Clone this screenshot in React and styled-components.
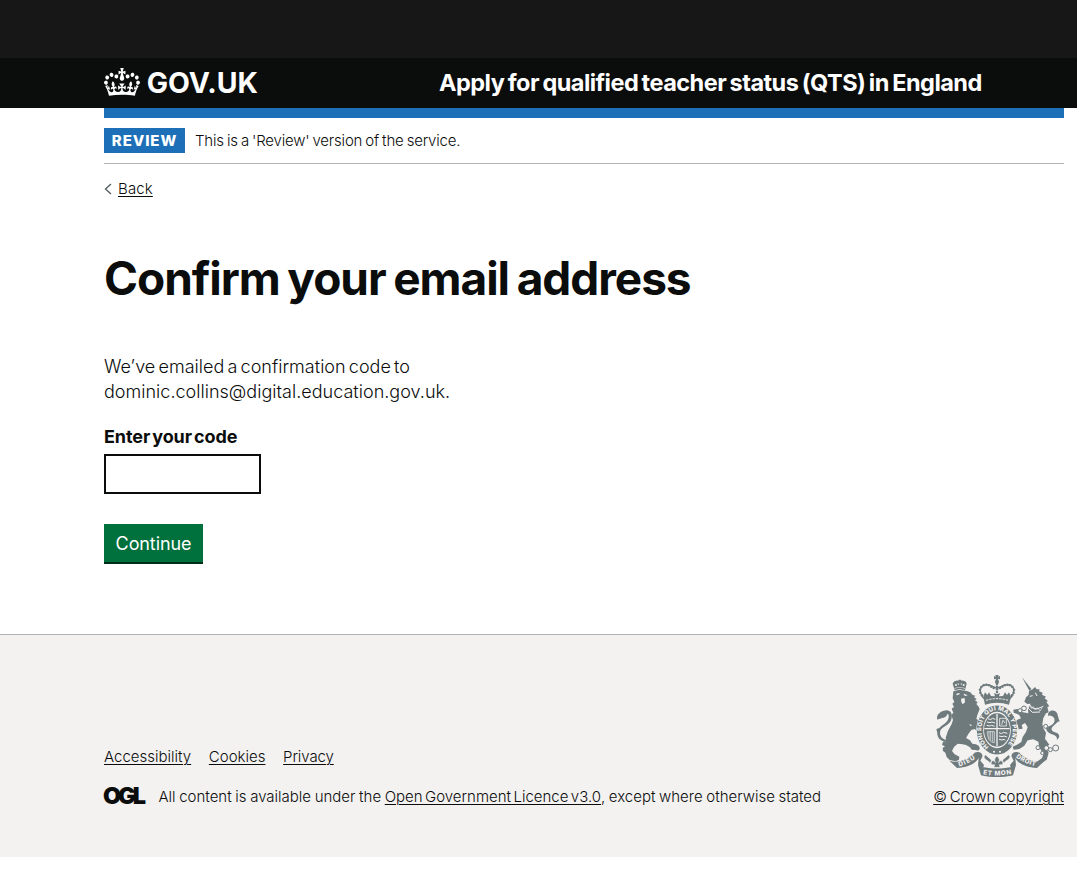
import React from 'react';
import styled, { createGlobalStyle } from 'styled-components';

const GlobalStyle = createGlobalStyle`
  *, *::before, *::after { box-sizing: border-box; }
  body {
    margin: 0;
    background: #fff;
    color: #0b0c0c;
    font-family: Inter, "Liberation Sans", Arial, sans-serif;
    font-weight: 300;
  }
`;

const Container = styled.div`
  width: 960px;
  margin-left: 104px;
`;

const TopStrip = styled.div`
  height: 58px;
  background: #171717;
`;

const Header = styled.header`
  height: 50px;
  background: #0b0c0c;
  color: #fff;
`;

const HeaderRow = styled(Container)`
  display: flex;
  height: 60px;
  border-bottom: 10px solid #1d70b8;
`;

const HomeLink = styled.a`
  display: flex;
  width: 335px;
  color: inherit;
  text-decoration: none;
`;

const CrownIcon = styled.svg`
  display: block;
  width: 36px;
  height: 28px;
  margin-top: 10px;
  fill: currentColor;
`;

const Wordmark = styled.span`
  margin-left: 6.7px;
  font-size: 28.4px;
  font-weight: 700;
  line-height: 50px;
`;

const ServiceName = styled.a`
  font-size: 23.5px;
  font-weight: 700;
  line-height: 50px;
  letter-spacing: -0.53px;
  word-spacing: -1.6px;
  white-space: nowrap;
  color: inherit;
  text-decoration: none;
`;

const PhaseBanner = styled(Container)`
  display: flex;
  align-items: center;
  height: 56px;
  padding-top: 10px;
  padding-bottom: 1px;
  border-bottom: 1px solid #b1b4b6;
`;

const PhaseTag = styled.strong`
  width: 81px;
  height: 25px;
  margin-right: 10px;
  background: #1d70b8;
  color: #fff;
  font-size: 15px;
  font-weight: 800;
  line-height: 25px;
  letter-spacing: 0.9px;
  text-align: center;
`;

const SmallText = styled.span`
  font-size: 15px;
  line-height: 20px;
  white-space: nowrap;
  letter-spacing: ${(p) => p.$tracking || 0}px;
  word-spacing: ${(p) => p.$spacing || 0}px;
`;

const PhaseText = styled(SmallText)`
  padding-top: 1px;
`;

const Link = styled.a`
  color: inherit;
  text-decoration: underline;
  text-decoration-thickness: 1px;
  text-underline-offset: 2px;
  word-spacing: ${(p) => (p.$spacing === undefined ? 'inherit' : `${p.$spacing}px`)};
`;

const BackRow = styled(Container)`
  display: flex;
  align-items: center;
  margin-top: 15px;
  height: 20px;
`;

const Chevron = styled.svg`
  width: 8px;
  height: 12px;
  margin-right: 6px;
  fill: none;
  stroke: #505a5f;
  stroke-width: 1.3;
`;

const Main = styled(Container).attrs({ as: 'main' })`
  height: 435px;
  padding-top: 54px;
`;

const Title = styled.h1`
  margin: 0;
  font-size: 46px;
  font-weight: 700;
  line-height: 50px;
  letter-spacing: -1.05px;
  word-spacing: -2.2px;
`;

const Paragraph = styled.p`
  margin: 51px 0 20px;
  font-size: 18px;
  line-height: 25px;
  letter-spacing: 0.02px;
  word-spacing: -1.9px;
`;

const Label = styled.label`
  display: block;
  font-size: 18px;
  font-weight: 700;
  line-height: 25px;
  letter-spacing: -0.1px;
  word-spacing: -2px;
`;

const CodeInput = styled.input`
  display: block;
  width: 157px;
  height: 40px;
  margin: 5px 0 30px;
  padding: 5px;
  border: 2px solid #0b0c0c;
  border-radius: 0;
  background: #fff;
  font: inherit;
`;

const Button = styled.button`
  display: block;
  width: 99px;
  height: 38px;
  padding: 2px 0 0;
  border: 0;
  background: #00703c;
  box-shadow: 0 2px 0 #002d18;
  color: #fff;
  font-family: inherit;
  font-size: 18px;
  font-weight: 400;
  line-height: 36px;
  letter-spacing: -0.1px;
`;

const Footer = styled.footer`
  height: 223px;
  padding-top: 40px;
  border-top: 1px solid #b1b4b6;
  background: #f3f2f1;
`;

const FooterRow = styled(Container)`
  display: flex;
  justify-content: space-between;
  align-items: flex-end;
  height: 132px;
`;

const FooterMeta = styled.div`
  display: flex;
  flex-direction: column;
  gap: 20px;
`;

const FooterLinks = styled.nav`
  display: flex;
  gap: 17.7px;
`;

const Licence = styled.div`
  display: flex;
  align-items: center;
  height: 20px;
`;

const OglMark = styled.span`
  width: 55.5px;
  margin-left: -1px;
  font-size: 23.5px;
  font-weight: 900;
  line-height: 18px;
  padding-bottom: 2px;
  letter-spacing: -3.1px;
`;

const Copyright = styled.div`
  display: flex;
  flex-direction: column;
  align-items: flex-end;
  gap: 10px;
`;

const ArmsIcon = styled.svg`
  display: block;
  width: 125px;
  height: 102px;
  margin-right: 4px;
`;

function Crown() {
  return (
    <CrownIcon viewBox="0 0 132 97" preserveAspectRatio="none" aria-hidden="true">
      <path
        fillRule="evenodd"
        d="M25 30.2c3.5 1.5 7.7-.2 9.1-3.7 1.5-3.6-.2-7.8-3.9-9.2-3.6-1.4-7.6.3-9.1 3.9-1.4 3.5.3 7.5 3.9 9zM9 39.5c3.6 1.5 7.8-.2 9.2-3.7 1.5-3.6-.2-7.8-3.9-9.1-3.6-1.5-7.6.2-9.1 3.8-1.4 3.5.3 7.5 3.8 9zM4.4 57.2c3.5 1.5 7.7-.2 9.1-3.8 1.5-3.6-.2-7.7-3.9-9.1-3.5-1.5-7.6.3-9.1 3.8-1.4 3.5.3 7.6 3.9 9.1zm38.3-21.4c3.5 1.5 7.7-.2 9.1-3.8 1.5-3.6-.2-7.7-3.9-9.1-3.6-1.5-7.6.3-9.1 3.8-1.3 3.6.4 7.7 3.9 9.1zm64.4-5.6c-3.6 1.5-7.8-.2-9.1-3.7-1.5-3.6.2-7.8 3.8-9.2 3.6-1.4 7.7.3 9.2 3.9 1.3 3.5-.4 7.5-3.9 9zm15.9 9.3c-3.6 1.5-7.7-.2-9.1-3.7-1.5-3.6.2-7.8 3.7-9.1 3.6-1.5 7.7.2 9.2 3.8 1.5 3.5-.3 7.5-3.8 9zm4.7 17.7c-3.6 1.5-7.8-.2-9.2-3.8-1.5-3.6.2-7.7 3.9-9.1 3.6-1.5 7.7.3 9.2 3.8 1.3 3.5-.4 7.6-3.9 9.1zM89.3 35.8c-3.6 1.5-7.8-.2-9.2-3.8-1.4-3.6.2-7.7 3.9-9.1 3.6-1.5 7.7.3 9.2 3.8 1.4 3.6-.3 7.7-3.9 9.1zM69.7 17.7l8.9 4.7V9.3l-8.9 2.8c-.2-.3-.5-.6-.9-.9L72.4 0H59.6l3.5 11.2c-.3.3-.6.5-.9.9l-8.8-2.8v13.1l8.8-4.7c.3.3.6.7.9.9l-5 15.4v.1c-.2.8-.4 1.6-.4 2.4 0 4.1 3.1 7.5 7 8.1h.2c.3 0 .7.1 1 .1.4 0 .7 0 1-.1h.2c4-.6 7.1-4.1 7.1-8.1 0-.8-.1-1.7-.4-2.4V34l-5.1-15.4c.4-.2.7-.6 1-.9zM66 92.8c16.9 0 32.8 1.1 47.1 3.2 4-16.9 8.9-26.7 14-33.5l-9.6-3.4c1 4.9 1.1 7.2 0 10.2-1.5-1.4-3-4.3-4.2-8.7L108.6 76c2.8-2 5-3.2 7.5-3.3-4.4 9.4-10 11.9-13.6 11.2-4.3-.8-6.3-4.6-5.6-7.9 1-4.7 5.7-5.9 8-.5 4.3-8.7-3-11.4-7.6-8.8 7.1-7.2 7.9-13.5 2.1-21.1-8 6.1-8.1 12.3-4.5 20.8-4.7-5.4-12.1-2.5-9.5 6.2 3.4-5.2 7.9-2 7.2 3.1-.6 4.3-6.4 7.8-13.5 7.2-10.3-.9-10.9-8-11.2-13.8 2.5-.5 7.1 1.8 11 7.3L80.2 60c-4.1 4.4-8 5.3-12.3 5.4 1.4-4.4 8-11.6 8-11.6H55.5s6.4 7.2 7.9 11.6c-4.2-.1-8-1-12.3-5.4l1.4 16.4c3.9-5.5 8.5-7.7 10.9-7.3-.3 5.8-.9 12.8-11.1 13.8-7.2.6-12.9-2.9-13.5-7.2-.7-5 3.8-8.3 7.1-3.1 2.7-8.7-4.6-11.6-9.4-6.2 3.7-8.5 3.6-14.7-4.6-20.8-5.8 7.6-5 13.9 2.2 21.1-4.7-2.6-11.9.1-7.7 8.8 2.3-5.5 7.1-4.2 8.1.5.7 3.3-1.3 7.1-5.7 7.9-3.5.7-9-1.8-13.5-11.2 2.5.1 4.7 1.3 7.5 3.3l-4.7-15.4c-1.2 4.4-2.7 7.2-4.3 8.7-1.1-3-.9-5.3 0-10.2l-9.5 3.4c5 6.9 9.9 16.7 14 33.5 14.8-2.1 30.8-3.2 47.7-3.2z"
      />
    </CrownIcon>
  );
}

const pearls = [
  [186, 91], [181, 83], [180, 74], [184, 66], [191, 61], [199, 59], [207, 61], [214, 65], [221, 69],
  [240, 69], [247, 65], [254, 61], [262, 59], [270, 61], [277, 66], [282, 74], [281, 83], [276, 91],
  [231, 57], [231, 65], [231, 73], [231, 81],
];

function RoyalArms() {
  const ink = '#6f7a7d';
  const paper = '#f3f2f1';
  return (
    <ArmsIcon viewBox="45 30 375 306" role="img" aria-label="Royal coat of arms">
      <defs>
        <path id="garter" d="M209 247 A47 59 0 1 1 253 247" />
        <path id="scroll-left" d="M116 305 Q146 297 174 275" />
        <path id="scroll-mid" d="M186 327 Q231 336 278 326" />
        <path id="scroll-right" d="M286 276 Q315 297 351 305" />
      </defs>

      {/* lion */}
      <g fill={ink}>
        <path d="M104 76 L98 56 C100 50 108 46 115 47 L117 44 H122 L124 47 C131 46 139 50 140 56 L135 76 L119 72Z" />
        <path d="M100 79 L118 74 L140 78 L151 82 L158 90 L166 92 L162 97 L170 102 L165 106 L173 112 L169 117 L176 125 L179 133 L172 150 L169 162 L180 168 L182 179 L177 182 L178 190 L170 197 L164 192 L154 195 L145 207 L138 219 L150 226 L157 236 L168 238 L176 242 L180 250 L175 257 L166 255 L155 254 L150 247 L138 240 L128 238 L113 236 L102 246 L96 258 L104 268 L118 275 L117 284 L107 289 L89 285 L80 276 L76 263 L69 258 L68 249 L75 244 L66 240 L69 230 L80 232 L77 218 L84 197 L95 177 L99 165 L94 150 L100 143 L95 131 L102 126 L97 116 L103 111 L98 100Z" />
        <path d="M52 164 C47 148 65 136 81 136 C97 137 99 157 91 170 C81 184 59 187 60 204 C61 218 70 224 83 225 L83 233 C63 230 50 219 52 202 C54 181 85 178 86 157 C87 148 84 145 82 148 C78 160 66 158 52 164Z" />
        <path d="M49 193 L56 189 L59 197 L52 203Z" />
      </g>
      <g fill={paper}>
        <path d="M108 87 L117 84 L120 87 L111 91Z M132 86 L143 91 L137 93 L131 90Z M123 101 L134 99 L135 112 L128 118 L124 111Z" />
        <circle cx="108" cy="60" r="3" /><circle cx="115" cy="57" r="2" /><circle cx="124" cy="57" r="2" /><circle cx="131" cy="60" r="3" />
        <path d="M104 69 Q119 64 135 69 V71 Q119 66 104 71Z M148 177 L157 181 L151 183Z" />
      </g>

      {/* unicorn */}
      <g fill={ink}>
        <path d="M306 37 L334 72 L328 77Z" />
        <path d="M327 78 L338 73 L345 66 L350 73 L359 73 L357 79 L368 83 L366 89 L378 95 L374 100 L384 108 L379 111 L388 124 L382 126 L386 142 L378 145 L370 159 L367 177 L370 190 L378 203 L375 221 L388 239 L377 247 L386 263 L380 284 L362 296 L350 291 L366 279 L371 266 L358 248 L355 230 L340 223 L323 226 L313 242 L298 252 L281 254 L278 245 L291 239 L304 231 L308 216 L318 201 L323 186 L315 174 L305 180 L308 191 L296 193 L293 179 L285 171 L292 164 L303 160 L297 149 L281 143 L280 134 L292 132 L309 142 L325 145 L324 132 L332 116 L322 117 L313 110 L318 97 L326 89Z" />
        <path d="M379 185 C398 183 408 171 402 158 C395 152 388 150 384 153 C383 139 396 133 406 139 C416 145 413 162 420 169 C412 169 409 176 400 183 C391 190 393 200 409 203 C417 206 423 214 410 225 C414 212 402 210 392 206 C383 203 377 196 379 185Z" />
      </g>
      <g fill="none" stroke={paper} strokeWidth="3">
        <path d="M327 117 L337 129 L351 132 L370 124 M324 129 L337 142 L360 141" />
        <path d="M329 122 L334 130 L340 125 L346 135 L353 128 L360 138 L366 128" strokeWidth="2" />
        <path d="M329 94 L338 92 M346 83 L351 93" />
      </g>
      <g fill={paper} stroke={ink} strokeWidth="3">
        <circle cx="312" cy="130" r="7" /><circle cx="300" cy="137" r="6" /><circle cx="377" cy="184" r="6" />
        <circle cx="354" cy="248" r="6" /><circle cx="367" cy="264" r="5" /><circle cx="379" cy="249" r="7" />
        <circle cx="391" cy="254" r="6" /><circle cx="407" cy="249" r="9" />
      </g>

      {/* crown over the shield */}
      <path
        fill={paper}
        stroke={ink}
        strokeWidth="4"
        d="M194 103 C170 78 183 59 199 59 C216 60 227 70 231 70 C235 70 246 60 263 59 C280 59 292 78 268 103Z"
      />
      <g fill={ink}>
        {pearls.map(([cx, cy]) => (
          <circle key={`${cx}-${cy}`} cx={cx} cy={cy} r="3.8" />
        ))}
        <path d="M226 30 H236 L234 35 L240 33 V43 L234 41 L236 50 H226 L228 41 L222 43 V33 L228 35Z" />
        <circle cx="231" cy="51" r="6" />
        <path d="M190 95 L195 82 L202 90 L207 82 L213 93 L225 94 L222 84 L231 88 L240 84 L237 94 L249 93 L255 82 L261 90 L267 82 L273 95 L267 119 Q231 108 195 119Z" />
      </g>
      <path d="M198 106 Q231 96 265 106" fill="none" stroke={paper} strokeWidth="3" strokeDasharray="7 3" />

      {/* garter and shield */}
      <ellipse cx="231" cy="195" rx="62" ry="76" fill={paper} />
      <ellipse cx="231" cy="195" rx="51" ry="64" fill="none" stroke={ink} strokeWidth="19" />
      <text fill={paper} fontFamily="Inter, sans-serif" fontSize="18" fontWeight="800">
        <textPath href="#garter" startOffset="3" textLength="270">HONI SOIT QUI MAL Y PENSE</textPath>
      </text>
      <g fill={paper}>
        <circle cx="222" cy="260" r="3" /><circle cx="240" cy="260" r="3" />
      </g>
      <ellipse cx="231" cy="195" rx="39" ry="50" fill={ink} />
      <g stroke={paper} fill="none">
        <path d="M231 147 V244 M193 191 H269" strokeWidth="4" />
        <g strokeWidth="3">
          <path d="M204 161 l8 3 l5 -4 l9 3 M201 171 l9 2 l6 -2 l9 3 M200 181 l9 2 l6 -2 l9 3" />
          <path d="M237 203 l8 3 l5 -4 l12 3 M237 213 l9 2 l6 -2 l9 3 M237 223 l9 2 l6 -2 l4 3" />
          <path d="M239 160 H259 V183 H239Z M245 179 L249 166 L255 174" strokeWidth="2.5" />
          <path d="M202 200 C202 224 212 232 223 233 V200 M207 200 V222 M212 200 V227 M218 200 V230 M202 200 H223" strokeWidth="2" />
        </g>
      </g>

      {/* motto scroll */}
      <g fill={ink}>
        <path d="M88 287 C113 296 146 283 164 263 L181 268 C178 286 157 306 111 309Z" />
        <path d="M164 263 C176 258 190 265 187 275 L181 287 L192 300 L189 309 L174 301 L176 280Z" />
        <path d="M374 287 C349 296 316 283 298 263 L281 268 C284 286 305 306 351 309Z" />
        <path d="M298 263 C286 258 272 265 275 275 L281 287 L270 300 L273 309 L288 301 L286 280Z" />
        <path d="M174 300 C195 314 267 314 288 300 L279 331 C260 338 202 338 183 331Z" />
      </g>
      <g fill={ink} stroke={paper} strokeWidth="1.5">
        <path d="M231 273 C240 282 239 287 235 293 C242 282 252 288 247 299 L238 299 L240 307 H222 L224 299 L215 299 C210 288 220 282 227 293 C223 287 222 282 231 273Z" />
        <path d="M197 269 C205 280 210 278 214 286 L211 294 C204 286 193 283 192 275Z M265 269 C257 280 252 278 248 286 L251 294 C258 286 269 283 270 275Z" />
      </g>
      <g fill={paper} fontFamily="Inter, sans-serif" fontSize="19" fontWeight="800">
        <text><textPath href="#scroll-left" startOffset="2" textLength="54">DIEU</textPath></text>
        <text><textPath href="#scroll-mid" startOffset="3" textLength="86">ET MON</textPath></text>
        <text><textPath href="#scroll-right" startOffset="2" textLength="64">DROIT</textPath></text>
      </g>
    </ArmsIcon>
  );
}

export default function App() {
  return (
    <>
      <GlobalStyle />
      <TopStrip />
      <Header>
        <HeaderRow>
          <HomeLink>
            <Crown />
            <Wordmark>GOV.UK</Wordmark>
          </HomeLink>
          <ServiceName>Apply for qualified teacher status (QTS) in England</ServiceName>
        </HeaderRow>
      </Header>
      <PhaseBanner>
        <PhaseTag>REVIEW</PhaseTag>
        <PhaseText $tracking={-0.2} $spacing={-0.9}>This is a 'Review' version of the service.</PhaseText>
      </PhaseBanner>
      <BackRow>
        <Chevron viewBox="0 0 8 12"><path d="M7 1 L1.5 6 L7 11" /></Chevron>
        <SmallText $tracking={0.15}><Link>Back</Link></SmallText>
      </BackRow>
      <Main>
        <Title>Confirm your email address</Title>
        <Paragraph>
          We’ve emailed a confirmation code to
          <br />
          dominic.collins@digital.education.gov.uk.
        </Paragraph>
        <Label htmlFor="code">Enter your code</Label>
        <CodeInput id="code" type="text" />
        <Button type="button">Continue</Button>
      </Main>
      <Footer>
        <FooterRow>
          <FooterMeta>
            <FooterLinks>
              <SmallText><Link>Accessibility</Link></SmallText>
              <SmallText><Link>Cookies</Link></SmallText>
              <SmallText $tracking={-0.1}><Link>Privacy</Link></SmallText>
            </FooterLinks>
            <Licence>
              <OglMark>OGL</OglMark>
              <SmallText $spacing={-0.6}>
                All content is available under the <Link $spacing={-1.8}>Open Government Licence v3.0</Link>, except where otherwise stated
              </SmallText>
            </Licence>
          </FooterMeta>
          <Copyright>
            <RoyalArms />
            <SmallText $spacing={-1.4}><Link>© Crown copyright</Link></SmallText>
          </Copyright>
        </FooterRow>
      </Footer>
    </>
  );
}
